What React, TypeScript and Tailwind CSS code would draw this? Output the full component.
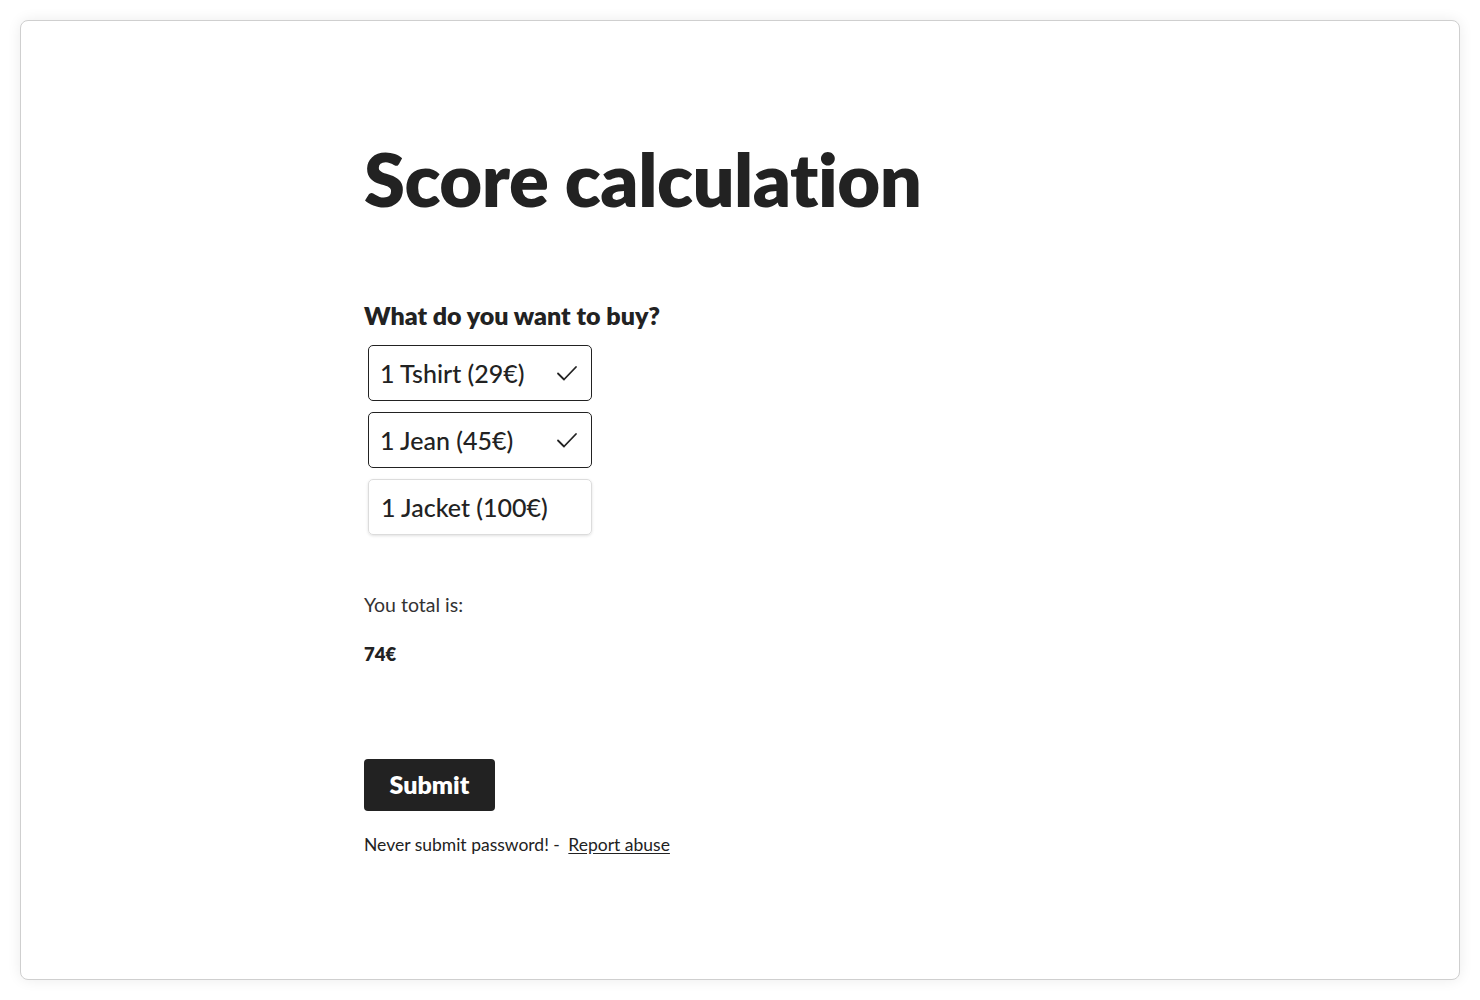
import { useState } from "react";

const items = [
  { id: "tshirt", label: "1 Tshirt (29€)", price: 29 },
  { id: "jean", label: "1 Jean (45€)", price: 45 },
  { id: "jacket", label: "1 Jacket (100€)", price: 100 },
];

function Check() {
  return (
    <svg width="22" height="18" viewBox="0 0 22 18" fill="none">
      <path d="M2 9.5l6 6L20 3" stroke="#222" strokeWidth="1.8" strokeLinecap="round" strokeLinejoin="round" />
    </svg>
  );
}

export default function App() {
  const [selected, setSelected] = useState<string[]>(["tshirt", "jean"]);

  const toggle = (id: string) =>
    setSelected((s) => (s.includes(id) ? s.filter((x) => x !== id) : [...s, id]));

  const total = items.filter((i) => selected.includes(i.id)).reduce((a, i) => a + i.price, 0);

  return (
    <div className="min-h-[1000px] bg-white p-5 font-['Lato',sans-serif] text-[#222]">
      <div className="h-[960px] rounded-lg border border-[#cfcfcf] bg-white shadow-[0_0_14px_rgba(0,0,0,0.08)]">
        <div className="pl-[343px] pt-[114px]">
          <h1 className="text-[74px] font-extrabold leading-[88px] tracking-[-0.5px]">Score calculation</h1>

          <h2 className="mt-[77px] text-[25px] font-extrabold leading-[30px]">What do you want to buy?</h2>

          <div className="ml-1 mt-[15px] flex flex-col gap-[11px]">
            {items.map((item) => {
              const on = selected.includes(item.id);
              return (
                <button
                  key={item.id}
                  onClick={() => toggle(item.id)}
                  className={
                    on
                      ? "flex h-[56px] w-[224px] items-center justify-between rounded-[5px] border-[1.5px] border-[#222] pl-[11px] pr-[13px] text-left text-[25px] font-medium leading-none"
                      : "flex h-[56px] w-[224px] items-center justify-between rounded-[5px] border border-[#dcdcdc] pl-[12px] pr-[13px] text-left text-[25px] font-medium leading-none shadow-[0_1px_3px_rgba(0,0,0,0.12)]"
                  }
                >
                  <span>{item.label}</span>
                  {on && <Check />}
                </button>
              );
            })}
          </div>

          <p className="mt-[58px] text-[19.5px] leading-[24px] text-[#333]">You total is:</p>
          <p className="mt-[26px] text-[18.5px] font-extrabold leading-[22px]">{total}€</p>

          <button className="mt-[94px] h-[52px] w-[131px] rounded-[4px] bg-[#222] text-[25px] font-extrabold text-white">
            Submit
          </button>

          <p className="mt-[23px] text-[17.5px] leading-[22px]">
            Never submit password! -{" "}
            <a href="#" className="ml-1 underline underline-offset-2">
              Report abuse
            </a>
          </p>
        </div>
      </div>
    </div>
  );
}
